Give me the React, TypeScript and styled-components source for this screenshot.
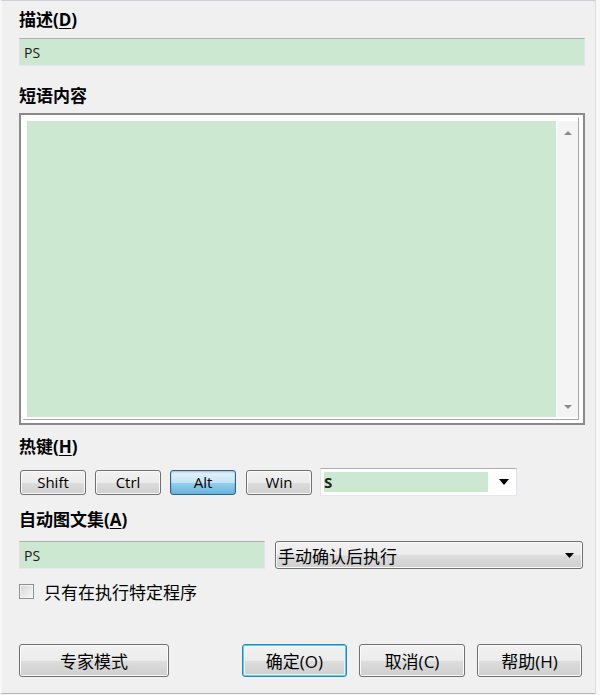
import React from "react";
import styled, { createGlobalStyle, css } from "styled-components";

const GlobalStyle = createGlobalStyle`
  html, body { margin: 0; padding: 0; background: #f8f8f8; }
  * { box-sizing: border-box; }
`;

const FONT = `"Open Sans", "Noto Sans CJK SC", sans-serif`;

const Window = styled.div`
  width: 596px;
  height: 694px;
  background: #f0f0f0;
  border-top: 1px solid #cfd0da;
  border-left: 2px solid #f7f7f7;
  border-right: 1px solid #dcdcdc;
  border-bottom: 1px solid #b4b4b4;
  padding: 9px 10px 0 17px;
  display: flex;
  flex-direction: column;
  font-family: ${FONT};
  color: #000;
`;

const Label = styled.div<{ $mt?: number }>`
  height: 20px;
  line-height: 20px;
  font-size: 17px;
  font-weight: 700;
  margin-top: ${(p) => p.$mt ?? 0}px;
  white-space: nowrap;
`;

const Key = styled.span`
  text-decoration: underline;
  text-underline-offset: 2px;
`;

const GreenInput = styled.div<{ $w?: number; $mt?: number }>`
  height: 28px;
  width: ${(p) => (p.$w ? `${p.$w}px` : "auto")};
  margin-top: ${(p) => p.$mt ?? 0}px;
  background: #cde8d0;
  border: 1px solid;
  border-color: #abadb3 #e2e3ea #e3e9ef #e2e3ea;
  padding: 0 4px;
  display: flex;
  align-items: center;
  font-size: 14px;
  color: #1a1a1a;
`;

const TextFrame = styled.div`
  margin-top: 7px;
  height: 312px;
  border: 2px solid #8a8a8a;
  background: #fff;
  padding: 2px 4px 3px 2px;
  display: flex;
`;

const TextInner = styled.div`
  flex: 1;
  display: flex;
  border: 1px solid;
  border-color: #fff #a8a8a8 #a8a8a8 #fff;
  padding: 3px 0 2px 3px;
`;

const TextArea = styled.div`
  flex: 1;
  background: #cde8d0;
`;

const ScrollBar = styled.div`
  width: 22px;
  background: #f4f4f4;
  border-left: 1px solid #fff;
  display: flex;
  flex-direction: column;
  justify-content: space-between;
  align-items: center;
  padding: 10px 0 8px;
`;

const Arrow = styled.svg`
  display: block;
`;

const Row = styled.div<{ $mt?: number }>`
  display: flex;
  align-items: center;
  margin-top: ${(p) => p.$mt ?? 0}px;
`;

const buttonBase = css`
  font-family: ${FONT};
  color: #000;
  border: 1px solid #707070;
  border-radius: 3px;
  background: linear-gradient(#f2f2f2 0%, #ebebeb 50%, #dddddd 50%, #cfcfcf 100%);
  box-shadow: inset 0 0 0 1px #fbfbfb;
  display: flex;
  align-items: center;
  justify-content: center;
  padding: 0;
`;

const HotkeyButton = styled.button<{ $pressed?: boolean; $first?: boolean }>`
  ${buttonBase};
  width: 66px;
  height: 25px;
  font-size: 15px;
  margin-left: ${(p) => (p.$first ? 1 : 0)}px;
  margin-right: ${(p) => (p.$pressed ? 10 : 9)}px;
  ${(p) =>
    p.$pressed &&
    css`
      border-color: #2c628b;
      background: linear-gradient(#e5f4fc 0%, #c4e5f6 50%, #98d1ef 50%, #68b3db 100%);
      box-shadow: inset 0 1px 2px rgba(0, 0, 0, 0.25);
    `}
`;

const KeyCombo = styled.div`
  width: 197px;
  height: 28px;
  margin-left: -1px;
  background: #fff;
  border: 1px solid;
  border-color: #abadb3 #e2e3ea #e3e9ef #e2e3ea;
  padding: 3px;
  display: flex;
  align-items: stretch;
`;

const KeyValue = styled.div`
  width: 164px;
  background: #cde8d0;
  font-size: 15px;
  font-weight: 700;
  color: #1a2a1a;
  display: flex;
  align-items: center;
`;

const ComboArrow = styled.div`
  flex: 1;
  display: flex;
  align-items: center;
  justify-content: center;
  padding-left: 6px;
`;

const Dropdown = styled.div`
  ${buttonBase};
  width: 308px;
  height: 28px;
  margin-left: 10px;
  justify-content: space-between;
  padding: 0 8px 0 2px;
  font-size: 17px;
`;

const CheckRow = styled.label`
  display: flex;
  align-items: center;
  margin-top: 12px;
  font-size: 17px;
  height: 20px;
  gap: 10px;
`;

const CheckBox = styled.span`
  width: 15px;
  height: 15px;
  border: 1px solid #8e8f8f;
  background: linear-gradient(135deg, #d4d4d4, #f8f8f8);
  box-shadow: inset 0 0 0 1px #f4f4f4;
`;

const Footer = styled.div`
  display: flex;
  align-items: center;
  margin-top: 43px;
`;

const DialogButton = styled.button<{ $w: number; $ml: number; $default?: boolean }>`
  ${buttonBase};
  width: ${(p) => p.$w}px;
  height: 33px;
  margin-left: ${(p) => p.$ml}px;
  font-size: 17px;
  ${(p) =>
    p.$default &&
    css`
      border-color: #3c7fb1;
      box-shadow: inset 0 0 0 1px #48d5fd, inset 0 0 0 2px #f4f4f4;
    `}
`;

const Down = ({ color = "#000", w = 10, h = 5 }: { color?: string; w?: number; h?: number }) => (
  <Arrow width={w} height={h} viewBox={`0 0 ${w} ${h}`}>
    <polygon points={`0,0 ${w},0 ${w / 2},${h}`} fill={color} />
  </Arrow>
);

const Up = ({ color = "#000", w = 10, h = 5 }: { color?: string; w?: number; h?: number }) => (
  <Arrow width={w} height={h} viewBox={`0 0 ${w} ${h}`}>
    <polygon points={`0,${h} ${w},${h} ${w / 2},0`} fill={color} />
  </Arrow>
);

export default function App() {
  return (
    <>
      <GlobalStyle />
      <Window>
        <Label>
          描述(<Key>D</Key>)
        </Label>
        <GreenInput $mt={8}>PS</GreenInput>

        <Label $mt={20}>短语内容</Label>
        <TextFrame>
          <TextInner>
            <TextArea />
            <ScrollBar>
              <Up color="#8a8a8a" w={8} h={4} />
              <Down color="#8a8a8a" w={8} h={4} />
            </ScrollBar>
          </TextInner>
        </TextFrame>

        <Label $mt={12}>
          热键(<Key>H</Key>)
        </Label>
        <Row $mt={11}>
          <HotkeyButton $first>Shift</HotkeyButton>
          <HotkeyButton>Ctrl</HotkeyButton>
          <HotkeyButton $pressed>Alt</HotkeyButton>
          <HotkeyButton>Win</HotkeyButton>
          <KeyCombo>
            <KeyValue>S</KeyValue>
            <ComboArrow>
              <Down w={10} h={6} />
            </ComboArrow>
          </KeyCombo>
        </Row>

        <Label $mt={14}>
          自动图文集(<Key>A</Key>)
        </Label>
        <Row $mt={11}>
          <GreenInput $w={246}>PS</GreenInput>
          <Dropdown>
            <span>手动确认后执行</span>
            <Down w={9} h={5} />
          </Dropdown>
        </Row>

        <CheckRow>
          <CheckBox />
          只有在执行特定程序
        </CheckRow>

        <Footer>
          <DialogButton $w={150} $ml={0}>专家模式</DialogButton>
          <DialogButton $w={105} $ml={73} $default>
            确定(O)
          </DialogButton>
          <DialogButton $w={106} $ml={12}>取消(C)</DialogButton>
          <DialogButton $w={105} $ml={12}>帮助(H)</DialogButton>
        </Footer>
      </Window>
    </>
  );
}
